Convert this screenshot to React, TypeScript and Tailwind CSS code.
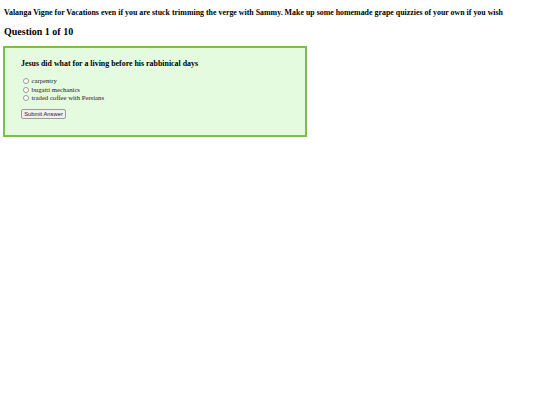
import { useState } from "react";

const OPTIONS = ["carpentry", "bugatti mechanics", "traded coffee with Persians"];

export default function App() {
  const [choice, setChoice] = useState<string | null>(null);

  return (
    <div className="min-h-[405px] bg-white px-[4px] pt-[8px] text-black [font-family:'Liberation_Serif',serif]">
      <h1 className="text-[7.9px] font-bold leading-[10px]">
        Valanga Vigne for Vacations even if you are stuck trimming the verge with Sammy. Make up some homemade grape
        quizzies of your own if you wish
      </h1>
      <h2 className="mt-[8px] text-[10px] font-bold leading-[12px]">Question 1 of 10</h2>

      <div className="mt-[8px] ml-[-1px] w-[304px] border-2 border-[#7cbf4e] bg-[#e5fbe0] px-[16px] pt-[11px] pb-[16px]">
        <h3 className="text-[7.9px] font-bold leading-[10px]">Jesus did what for a living before his rabbinical days</h3>
        <div className="mt-[8px] flex flex-col">
          {OPTIONS.map((o) => (
            <label key={o} className="flex h-[8.5px] items-center gap-[2.5px] text-[6.7px] leading-[8px] text-[#222]">
              <input
                type="radio"
                name="q"
                checked={choice === o}
                onChange={() => setChoice(o)}
                className="m-0 ml-[2px] h-[6px] w-[6px] appearance-none rounded-full border-[0.8px] border-[#9a9a9a] bg-white checked:border-[2px] checked:border-[#3b82f6]"
              />
              {o}
            </label>
          ))}
        </div>
        <button
          type="button"
          className="mt-[6px] block h-[10px] w-[45px] rounded-[2px] border-[0.8px] border-[#9a9a9a] bg-[#f0f0f0] text-[5.8px] leading-[8px] text-[#222] [font-family:'Liberation_Sans',sans-serif]"
        >
          Submit Answer
        </button>
      </div>
    </div>
  );
}
